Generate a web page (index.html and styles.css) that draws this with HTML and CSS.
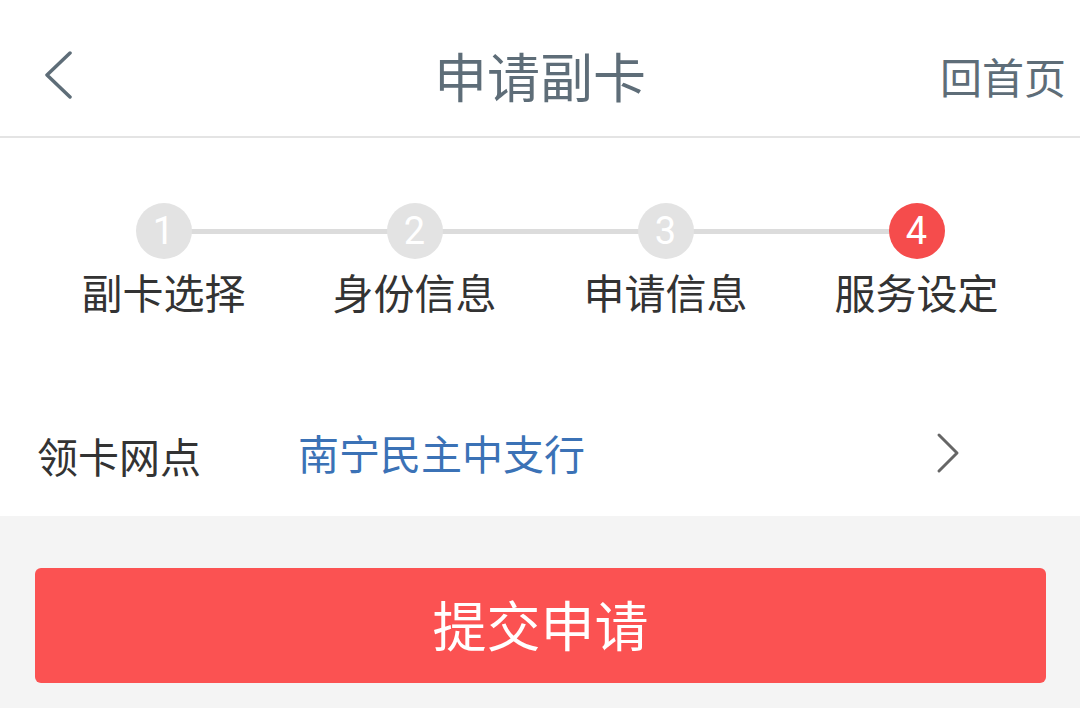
FILE: index.html
```html
<!DOCTYPE html>
<html lang="zh-CN">
<head>
    <meta charset="UTF-8">
    <meta name="viewport" content="width=device-width, initial-scale=1.0">
    <title>申请副卡</title>
    <link rel="stylesheet" href="styles.css">
</head>
<body>
    <header class="topbar">
        <div class="topbar-left">
            <svg class="back-icon" width="30" height="48" viewBox="0 0 30 48">
                <polyline points="27,2 4,24 27,46" fill="none" stroke="#5e6d78" stroke-width="3.5" stroke-linecap="round" stroke-linejoin="round"/>
            </svg>
        </div>
        <h1 class="title">申请副卡</h1>
        <div class="topbar-right">回首页</div>
    </header>

    <section class="steps">
        <div class="step-list">
            <div class="step">
                <span class="step-num">1</span>
                <span class="step-label">副卡选择</span>
            </div>
            <div class="step">
                <span class="step-num">2</span>
                <span class="step-label">身份信息</span>
            </div>
            <div class="step">
                <span class="step-num">3</span>
                <span class="step-label">申请信息</span>
            </div>
            <div class="step active">
                <span class="step-num">4</span>
                <span class="step-label">服务设定</span>
            </div>
        </div>
    </section>

    <div class="field-row">
        <span class="field-label">领卡网点</span>
        <span class="field-value">南宁民主中支行</span>
        <svg class="arrow-icon" width="24" height="42" viewBox="0 0 24 42">
            <polyline points="3,3 21,21 3,39" fill="none" stroke="#666" stroke-width="3" stroke-linecap="round" stroke-linejoin="round"/>
        </svg>
    </div>

    <div class="footer">
        <button class="submit">提交申请</button>
    </div>
</body>
</html>
```

FILE: styles.css
```css
html, body {
    margin: 0;
    padding: 0;
}
body {
    font-family: "Noto Sans CJK SC", "Noto Sans", sans-serif;
    background: #f4f4f4;
    color: #333;
    height: 708px;
    overflow: hidden;
}
.topbar {
    display: grid;
    grid-template-columns: 1fr auto 1fr;
    align-items: center;
    height: 138px;
    box-sizing: border-box;
    padding-top: 14px;
    background: #fff;
    border-bottom: 2px solid #e4e4e4;
}
.topbar-left {
    padding-left: 43px;
    display: flex;
    align-items: center;
}
.back-icon {
    display: block;
}
.title {
    margin: 0;
    font-size: 53px;
    font-weight: normal;
    color: #5e6d78;
    line-height: 1;
}
.topbar-right {
    justify-self: end;
    padding-right: 14px;
    font-size: 42px;
    color: #5e6d78;
}
.steps {
    background: #fff;
    height: 256px;
    padding: 65px 38px 0;
    box-sizing: border-box;
}
.step-list {
    display: grid;
    grid-template-columns: repeat(4, 1fr);
    position: relative;
}
.step-list::before {
    content: "";
    position: absolute;
    left: 12.5%;
    right: 12.5%;
    top: 26px;
    height: 5px;
    background: #dcdcdc;
}
.step {
    display: flex;
    flex-direction: column;
    align-items: center;
    position: relative;
}
.step-num {
    width: 56px;
    height: 56px;
    border-radius: 50%;
    background: #e3e3e3;
    color: #fff;
    font-family: Roboto, "Noto Sans", sans-serif;
    font-size: 38px;
    line-height: 56px;
    text-align: center;
}
.step.active .step-num {
    background: #f54c4c;
}
.step-label {
    margin-top: 7px;
    font-size: 41px;
    line-height: 50px;
    color: #333;
}
.field-row {
    display: flex;
    align-items: center;
    height: 122px;
    background: #fff;
    padding: 0 120px 0 37px;
}
.field-label {
    width: 261px;
    font-size: 41px;
    color: #333;
}
.field-value {
    flex: 1;
    font-size: 41px;
    color: #3b72b6;
    padding-bottom: 6px;
}
.arrow-icon {
    display: block;
    margin-bottom: 4px;
}
.footer {
    padding: 52px 34px 0 35px;
}
.submit {
    display: block;
    width: 100%;
    height: 115px;
    border: none;
    border-radius: 6px;
    background: #fb5252;
    color: #fff;
    font-family: "Noto Sans CJK SC", "Noto Sans", sans-serif;
    font-size: 54px;
    padding: 0 0 4px;
}
```
